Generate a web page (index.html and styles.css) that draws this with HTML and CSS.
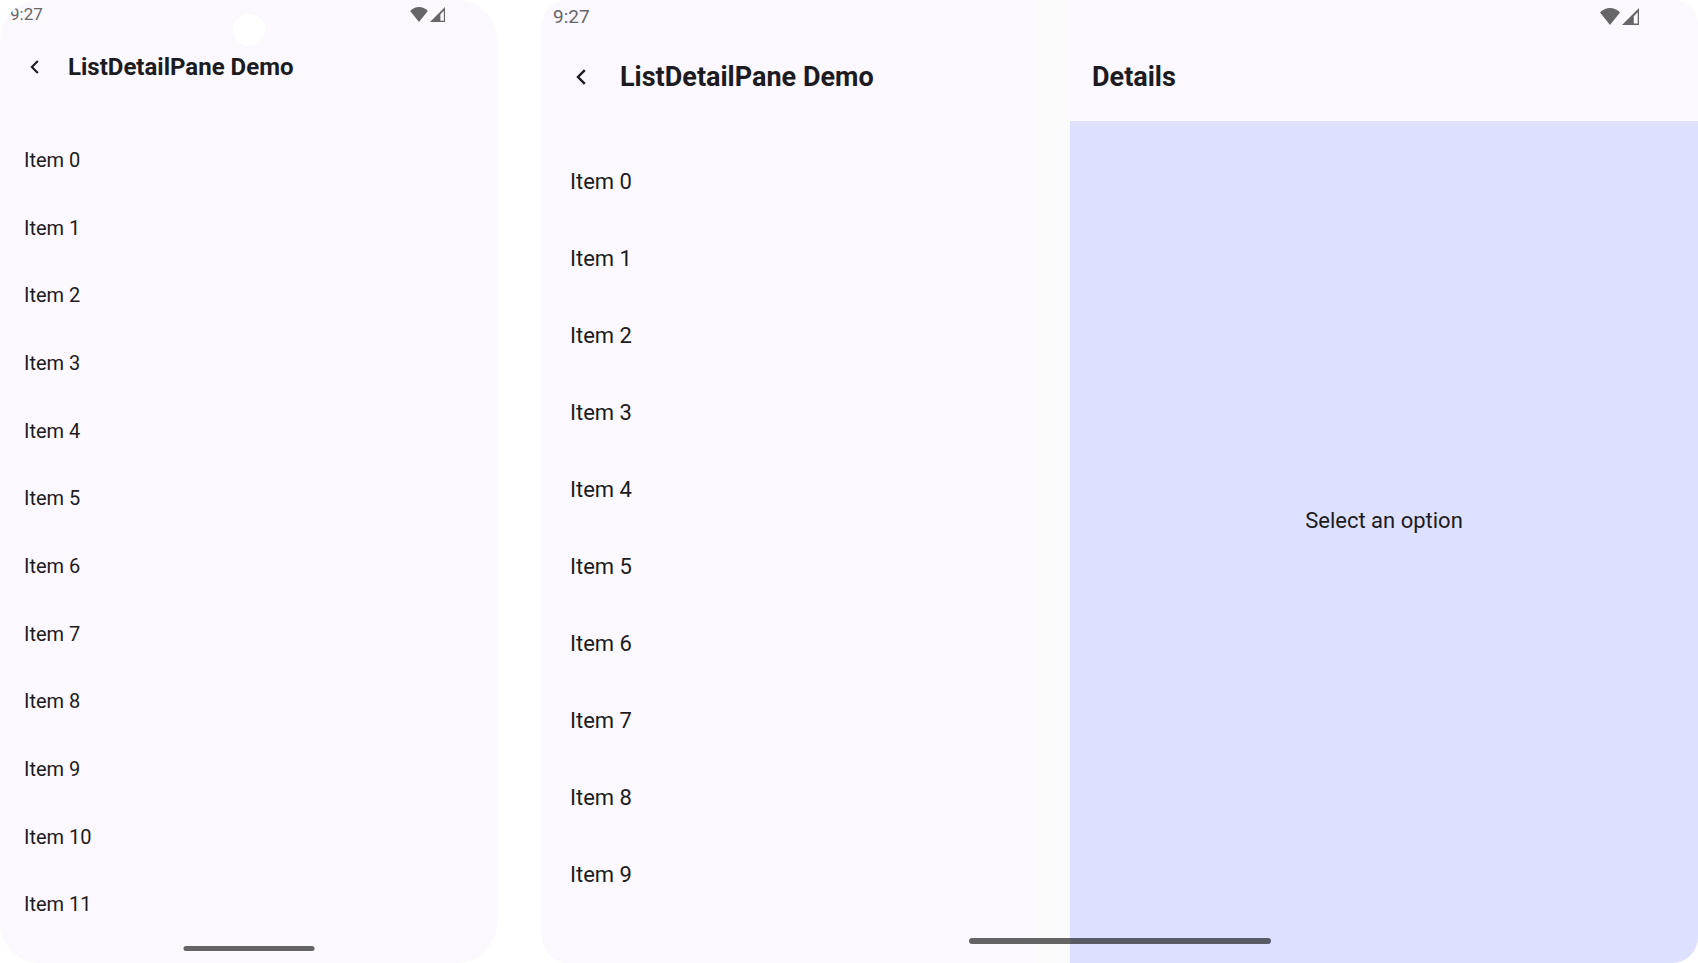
FILE: index.html
```html
<!DOCTYPE html>
<html lang="en">
<head>
<meta charset="utf-8">
<meta name="viewport" content="width=device-width, initial-scale=1">
<title>ListDetailPane Demo</title>
<link rel="stylesheet" href="styles.css">
</head>
<body>
<svg width="0" height="0" class="sprite" aria-hidden="true">
  <symbol id="wifi" viewBox="0 0 20 17"><path d="M0 4.4C2.8 1.6 6.2 0 10 0s7.2 1.600 10 4.400L10 17z"/></symbol>
  <symbol id="signal" viewBox="0 0 17 17"><path fill-rule="evenodd" d="M17 0v17H0zM15.700 4.300L11.800 8.200v7.300h3.900z"/></symbol>
  <symbol id="back" viewBox="0 0 10 16"><path d="M8.800 1.200L2 8l6.800 6.800" fill="none" stroke="currentColor" stroke-width="2.400"/></symbol>
</svg>
<main class="devices">
  <section class="device phone" aria-label="Phone">
    <header class="status">
      <time>9:27</time>
      <span class="indicators"><svg class="wifi"><use href="#wifi"/></svg><svg class="signal"><use href="#signal"/></svg></span>
    </header>
    <span class="camera"></span>
    <div class="pane list-pane">
      <div class="app-bar">
        <button class="back" type="button" aria-label="Back"><svg><use href="#back"/></svg></button>
        <h1>ListDetailPane Demo</h1>
      </div>
      <ul class="items">
        <li><button type="button">Item 0</button></li>
        <li><button type="button">Item 1</button></li>
        <li><button type="button">Item 2</button></li>
        <li><button type="button">Item 3</button></li>
        <li><button type="button">Item 4</button></li>
        <li><button type="button">Item 5</button></li>
        <li><button type="button">Item 6</button></li>
        <li><button type="button">Item 7</button></li>
        <li><button type="button">Item 8</button></li>
        <li><button type="button">Item 9</button></li>
        <li><button type="button">Item 10</button></li>
        <li><button type="button">Item 11</button></li>
      </ul>
    </div>
    <span class="home-bar"></span>
  </section>

  <section class="device tablet" aria-label="Tablet">
    <header class="status">
      <time>9:27</time>
      <span class="indicators"><svg class="wifi"><use href="#wifi"/></svg><svg class="signal"><use href="#signal"/></svg></span>
    </header>
    <div class="pane list-pane">
      <div class="app-bar">
        <button class="back" type="button" aria-label="Back"><svg><use href="#back"/></svg></button>
        <h1>ListDetailPane Demo</h1>
      </div>
      <ul class="items">
        <li><button type="button">Item 0</button></li>
        <li><button type="button">Item 1</button></li>
        <li><button type="button">Item 2</button></li>
        <li><button type="button">Item 3</button></li>
        <li><button type="button">Item 4</button></li>
        <li><button type="button">Item 5</button></li>
        <li><button type="button">Item 6</button></li>
        <li><button type="button">Item 7</button></li>
        <li><button type="button">Item 8</button></li>
        <li><button type="button">Item 9</button></li>
      </ul>
    </div>
    <div class="pane detail-pane">
      <div class="app-bar"><h2>Details</h2></div>
      <div class="detail"><p>Select an option</p></div>
    </div>
    <span class="home-bar"></span>
  </section>
</main>
</body>
</html>
```

FILE: styles.css
```css
* { box-sizing: border-box; }

body {
  margin: 0;
  background: #fff;
  color: #1b1b21;
  font-family: Roboto, "Liberation Sans", sans-serif;
}

button {
  margin: 0;
  padding: 0;
  border: 0;
  background: none;
  color: inherit;
  font: inherit;
  text-align: left;
  cursor: pointer;
}

h1, h2, p, ul { margin: 0; padding: 0; }

.sprite { position: absolute; }

.devices {
  display: flex;
  gap: 45px;
  min-height: 100vh;
}

.device {
  position: relative;
  display: flex;
  min-width: 0;
  overflow: hidden;
}

.phone {
  --status: 28px;
  --bar: 78px;
  --edge: 24px;
  flex: 497 1 0;
  border-radius: 40px;
  font-size: 20px;
}

.tablet {
  --status: 32px;
  --bar: 89px;
  --edge: 28px;
  flex: 1156 1 0;
  gap: 33px;
  border-radius: 26px;
  background: #fafafa;
  font-size: 22px;
}

/* System overlays */
.status {
  position: absolute;
  inset: 0 0 auto;
  display: flex;
  align-items: center;
  justify-content: space-between;
  height: var(--status);
  color: #666568;
}

.phone .status { padding: 0 52px 0 10px; font-size: 17px; }
.tablet .status { padding: 0 59px 0 11px; font-size: 19px; }

.indicators { display: flex; gap: 2px; }
.indicators svg { fill: currentColor; }
.phone .wifi { width: 18px; height: 15px; }
.phone .signal { width: 15px; height: 15px; }
.tablet .wifi { width: 20px; height: 17px; }
.tablet .signal { width: 17px; height: 17px; }

.camera {
  position: absolute;
  top: 14px;
  left: 50%;
  width: 32px;
  height: 32px;
  margin-left: -16px;
  border-radius: 50%;
  background: #fff;
}

.home-bar {
  position: absolute;
  left: 50%;
  transform: translateX(-50%);
  border-radius: 3px;
  background: rgba(0, 0, 0, 0.6);
}

.phone .home-bar { bottom: 12px; width: 131px; height: 5px; }
.tablet .home-bar { bottom: 19px; width: 302px; height: 6px; }

/* Panes */
.pane {
  display: flex;
  flex-direction: column;
  min-width: 0;
  padding-top: var(--status);
  background: #fbf8ff;
}

.list-pane { flex: 495 1 0; }
.detail-pane { flex: 628 1 0; }

.app-bar {
  display: flex;
  flex: none;
  align-items: center;
  height: var(--bar);
}

.app-bar h1, .app-bar h2 { font-weight: 700; white-space: nowrap; }
.phone h1 { font-size: 24px; }
.tablet h1, .tablet h2 { font-size: 27px; }

.back { display: flex; justify-content: center; }
.phone .back { width: 68px; }
.tablet .back { width: 78px; }
.phone .back svg { width: 9px; height: 14px; }
.tablet .back svg { width: 10px; height: 16px; }

.detail-pane .app-bar { padding-left: 22px; }

.items {
  display: flex;
  flex: 1;
  flex-direction: column;
  list-style: none;
}

.phone .items { padding: 20px 0 25px; }
.tablet .items { padding: 22px 0 50px; }

.items li { display: flex; flex: 1; }
.items button { flex: 1; padding: 0 var(--edge); }

.detail {
  display: flex;
  flex: 1;
  align-items: center;
  justify-content: center;
  padding-bottom: 44px;
  background: #dde0ff;
}
```
